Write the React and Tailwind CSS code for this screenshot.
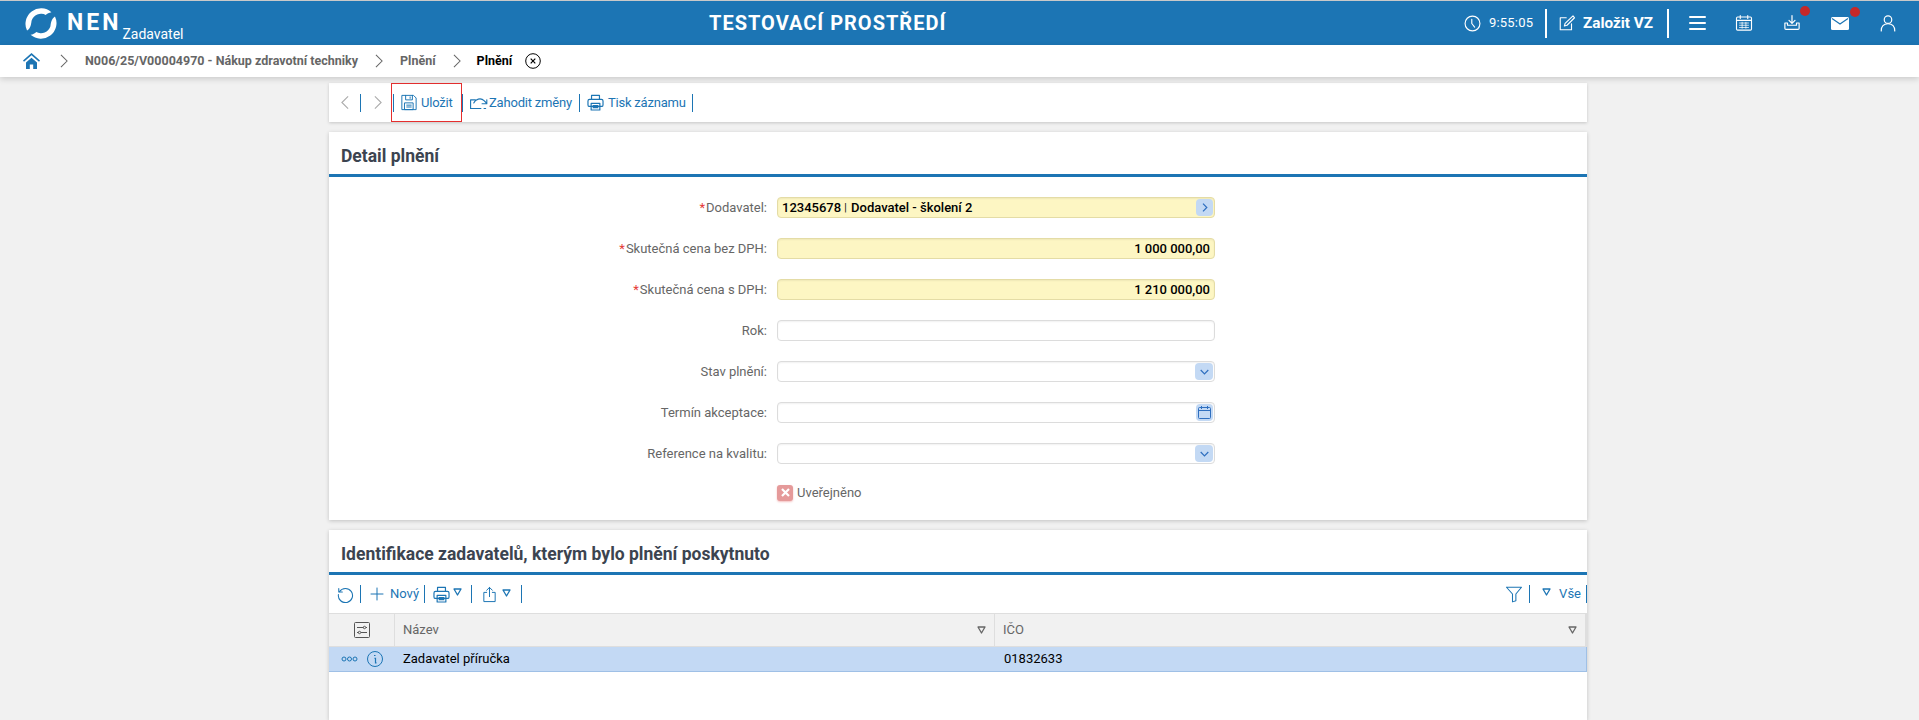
import React from "react";

const Sep = ({ className = "" }) => <span className={`block w-px h-[18px] shrink-0 bg-[#1c75b4] ${className}`} />;

const S = ({ w = 18, h = 18, vb = "0 0 24 24", sw = 1.5, className = "", children }) => (
  <svg width={w} height={h} viewBox={vb} fill="none" stroke="currentColor" strokeWidth={sw} strokeLinecap="round" strokeLinejoin="round" className={`shrink-0 ${className}`}>
    {children}
  </svg>
);

const Chevron = ({ className = "", w = 9, h = 16, left = false }) => (
  <svg width={w} height={h} viewBox="0 0 9 16" fill="none" stroke="currentColor" strokeWidth="1.2" className={className}>
    <path d={left ? "M8 1 1 8l7 7" : "M1 1l7 7-7 7"} />
  </svg>
);

const Tri = ({ className = "" }) => (
  <svg width="9" height="8" viewBox="0 0 9 8" fill="none" stroke="currentColor" strokeWidth="1.3" className={`shrink-0 ${className}`}>
    <path d="M1 1h7L4.5 7z" strokeLinejoin="round" />
  </svg>
);

const Printer = ({ className = "" }) => (
  <S w={19} h={19} className={className}>
    <path d="M7 8V3h10v5" />
    <rect x="2.5" y="8" width="19" height="9" rx="2" />
    <rect x="6.5" y="13" width="11" height="8.5" />
    <path d="M9 16h6M9 18.500h6" />
  </S>
);

function Logo() {
  const c = "M3.200 25.500A16.500 16.500 0 0 1 29 6C26.500 6.500 24.500 7.500 23 9A10.500 10.500 0 0 0 8 15C7.500 19 7 23 3.200 25.500Z";
  return (
    <svg width="34" height="35" viewBox="0 0 36 36" className="shrink-0" fill="#fff">
      <path d={c} />
      <path d={c} transform="rotate(180 18 18)" />
    </svg>
  );
}

function Header() {
  return (
    <header className="h-[45px] bg-[#1c75b4] border-t border-[#c9c9c9] flex items-center text-white relative">
      <div className="ml-[24px] flex items-center w-[156px] shrink-0">
        <Logo />
        <span className="ml-[9px] text-[23px] font-bold tracking-[3px] leading-none -mt-[1px]">NEN</span>
        <span className="text-[14px] ml-[1px] mt-[22px] leading-4">Zadavatel</span>
      </div>
      <div className="ml-[529px] text-[20px] font-bold tracking-[1px] whitespace-nowrap">TESTOVACÍ PROSTŘEDÍ</div>
      <div className="ml-auto flex items-center pr-[22px]">
        <S w={17} h={17} sw={1.6}><circle cx="12" cy="12" r="10.500" /><path d="M11 6v6l4 5" /></S>
        <span className="ml-[8px] text-[13px] tracking-[0.2px] w-[48px]">9:55:05</span>
        <span className="w-[2px] h-[29px] bg-white ml-[8px]" />
        <S w={18} h={18} className="ml-[11px]"><path d="M11 5H3v16h15v-8" /><path d="M20 2.500 22 5 12 15l-3.500 1 1-3.500z" /></S>
        <span className="ml-[7px] text-[15.300px] font-bold whitespace-nowrap w-[72px]">Založit VZ</span>
        <span className="w-[2px] h-[29px] bg-white ml-[12px]" />
        <svg width="17" height="14" viewBox="0 0 17 14" fill="#fff" className="ml-[20px] shrink-0"><rect y="0" width="17" height="2" rx="1" /><rect y="6" width="17" height="2" rx="1" /><rect y="12" width="17" height="2" rx="1" /></svg>
        <S w={18} h={18} sw={1.5} className="ml-[29px]"><rect x="2" y="4" width="20" height="17.500" rx="1.500" /><path d="M2 8.500h20M7 2v4M17 2v4" /><path d="M6 12h12M6 15h12M6 18h12M9.500 11v8M14.500 11v8" strokeWidth="1" /></S>
        <div className="relative ml-[30px]">
          <S w={18} h={18} sw={1.6}><path d="M12 2v10M8 8.500l4 4 4-4" /><path d="M6 12H2.500v7a1.500 1.500 0 0 0 1.500 1.500h16a1.500 1.500 0 0 0 1.500-1.500v-7H18v3H6z" /></S>
          <span className="absolute -top-[8px] left-[17px] w-[10px] h-[10px] rounded-full bg-[#c62828]" />
        </div>
        <div className="relative ml-[30px]">
          <svg width="18" height="13" viewBox="0 0 18 13" className="shrink-0 block"><rect width="18" height="13" rx="1.500" fill="#fff" /><path d="M1 1.500 9 7l8-5.500" fill="none" stroke="#1c75b4" strokeWidth="1.200" /></svg>
          <span className="absolute -top-[10px] left-[19px] w-[10px] h-[10px] rounded-full bg-[#c62828]" />
        </div>
        <S w={18} h={18} sw={1.6} className="ml-[30px]"><circle cx="12" cy="7.500" r="5" /><path d="M3 22.500c0-6 3.500-9.500 9-9.500s9 3.500 9 9.500" /></S>
      </div>
    </header>
  );
}

function Breadcrumb() {
  return (
    <nav className="h-[32px] bg-white shadow-[0_2px_6px_rgba(0,0,0,0.16)] flex items-center text-[12.5px] font-bold text-[#666] relative">
      <svg width="17" height="16" viewBox="0 0 17 16" fill="#1c75b4" className="ml-[23px] shrink-0">
        <path d="M8.500 0 0 7.500l1 1.200L8.500 2.200 16 8.700l1-1.200z" />
        <path d="M3 9.500 8.500 4.700 14 9.500V16h-3.800v-4.500H6.800V16H3z" />
      </svg>
      <Chevron className="ml-[20px] text-[#666] shrink-0" h={14} w={8} />
      <span className="ml-[17px]">N006/25/V00004970 - Nákup zdravotní techniky</span>
      <Chevron className="ml-[17px] text-[#666] shrink-0" h={14} w={8} />
      <span className="ml-[17px]">Plnění</span>
      <Chevron className="ml-[17px] text-[#666] shrink-0" h={14} w={8} />
      <span className="ml-[16px] text-black">Plnění</span>
      <svg width="16" height="16" viewBox="0 0 16 16" fill="none" stroke="#000" strokeWidth="1" className="ml-[13px] shrink-0"><circle cx="8" cy="8" r="7.300" /><path d="M5.700 5.700l4.600 4.600M10.300 5.700l-4.600 4.600" strokeWidth="1.200" /></svg>
    </nav>
  );
}

function Toolbar() {
  return (
    <div className="mt-[6px] h-[39px] bg-white shadow-[0_1px_3px_rgba(0,0,0,0.18)] flex items-center text-[#1c75b4] text-[13px] tracking-[-0.2px]">
      <Chevron left className="ml-[12px] text-[#aaa] shrink-0" w={8} h={15} />
      <Sep className="ml-[11px]" />
      <Chevron className="ml-[13px] text-[#aaa] shrink-0" w={8} h={15} />
      <Sep className="ml-[11px]" />
      <div className="h-[39px] -ml-[3px] w-[71px] border border-[#e52f2f] flex items-center shrink-0">
        <S w={18} h={19} sw={1.3} className="ml-[8px]"><path d="M3 2.500h15l3.500 3.500v15.500H3z" /><path d="M7.500 2.500v6h9v-6M13.500 4.500v2" /><rect x="6.500" y="12.500" width="11" height="9" /><path d="M9 15.500h6M9 18h6" /></S>
        <span className="ml-[3px]">Uložit</span>
      </div>
      <Sep />
      <S w={19} h={16} vb="0 0 24 20" sw={1.4} className="ml-[6px]"><path d="M2 17V6h6" /><path d="M2 17h13" /><path d="M6 10c2-5 9-7 13-3l3 3M16.500 11H22.500V6" /><path d="M21 17H19" /></S>
      <span className="ml-[1px] whitespace-nowrap">Zahodit změny</span>
      <Sep className="ml-[7px]" />
      <Printer className="ml-[6px]" />
      <span className="ml-[3px] whitespace-nowrap">Tisk záznamu</span>
      <Sep className="ml-[6px]" />
    </div>
  );
}

const Label = ({ req, children }) => (
  <div className="w-[438px] text-right text-[13px] text-[#666] shrink-0 whitespace-nowrap leading-[21px]">
    {req && <span className="text-[#e53935] mr-[1px]">*</span>}
    {children}:
  </div>
);

const Btn = ({ children, w = "w-[18px]" }) => (
  <span className={`absolute right-[1px] top-[1px] bottom-[1px] ${w} rounded-[4px] bg-[#c3d9f4] text-[#2f6fbf] flex items-center justify-center`}>{children}</span>
);

const Down = () => (
  <svg width="9" height="6" viewBox="0 0 9 6" fill="none" stroke="currentColor" strokeWidth="1.200"><path d="M.7 1 4.500 4.800 8.300 1" /></svg>
);

function Field({ label, req, value, align, children }) {
  return (
    <div className="flex items-center gap-[10px] h-[21px]">
      <Label req={req}>{label}</Label>
      <div className={`relative w-[438px] h-[21px] rounded-[4px] border shadow-[inset_0_1px_2px_rgba(0,0,0,0.06)] flex items-center text-[13px] font-medium text-black px-[4px] ${req ? "bg-[#fdf6c3] border-[#e4dca6]" : "bg-white border-[#dcdcdc]"} ${align === "right" ? "justify-end" : ""}`}>
        {value}
        {children}
      </div>
    </div>
  );
}

function CardTitle({ children }) {
  return (
    <div className="h-[45px] flex items-center pt-[7px] px-[12px] border-b-[3px] border-[#1c75b4] text-[17.5px] font-bold text-[#3c4450] whitespace-nowrap">{children}</div>
  );
}

function DetailCard() {
  return (
    <section className="mt-[10px] h-[388px] bg-white shadow-[0_1px_4px_rgba(0,0,0,0.2)]">
      <CardTitle>Detail plnění</CardTitle>
      <div className="pt-[20px] flex flex-col gap-[20px]">
        <Field label="Dodavatel" req value={<span>12345678 <span className="font-normal text-[10px] align-[1px] mr-[1px]">|</span> Dodavatel - školení 2</span>}>
          <Btn w="w-[17px]"><svg width="6" height="9" viewBox="0 0 6 9" fill="none" stroke="currentColor" strokeWidth="1.200"><path d="M1 .7 4.800 4.500 1 8.300" /></svg></Btn>
        </Field>
        <Field label="Skutečná cena bez DPH" req align="right" value="1 000 000,00" />
        <Field label="Skutečná cena s DPH" req align="right" value="1 210 000,00" />
        <Field label="Rok" />
        <Field label="Stav plnění"><Btn><Down /></Btn></Field>
        <Field label="Termín akceptace">
          <Btn w="w-[17px]"><svg width="13" height="13" viewBox="0 0 13 13" fill="none" stroke="currentColor" strokeWidth="1"><rect x=".5" y="1.500" width="12" height="11" rx="1" /><path d="M.5 4.500h12M3.500 0v3M9.500 0v3" /></svg></Btn>
        </Field>
        <Field label="Reference na kvalitu"><Btn><Down /></Btn></Field>
        <div className="flex items-center h-[21px] pl-[448px] -mt-[2px]">
          <span className="w-4 h-4 rounded-[3px] bg-[#e59a9a] flex items-center justify-center shadow-[0_1px_2px_rgba(229,100,100,0.4)]">
            <svg width="9" height="9" viewBox="0 0 9 9" stroke="#fff" strokeWidth="2.200"><path d="M1 1l7 7M8 1 1 8" /></svg>
          </span>
          <span className="ml-[4px] text-[13px] text-[#666]">Uveřejněno</span>
        </div>
      </div>
    </section>
  );
}

function ListCard() {
  return (
    <section className="mt-[10px] h-[190px] bg-white shadow-[0_1px_4px_rgba(0,0,0,0.2)] overflow-hidden">
      <CardTitle>Identifikace zadavatelů, kterým bylo plnění poskytnuto</CardTitle>
      <div className="h-[38px] flex items-center text-[#1c75b4] text-[13px]">
        <S w={17} h={17} sw={1.5} className="ml-[8px]"><path d="M3.500 8A10 10 0 1 1 2 12" /><path d="M2.500 3.500v5h5" /></S>
        <Sep className="ml-[6px]" />
        <S w={16} h={16} sw={1.5} className="ml-[8px]"><path d="M12 3v18M3 12h18" /></S>
        <span className="ml-[5px]">Nový</span>
        <Sep className="ml-[5px]" />
        <Printer className="ml-[7px]" />
        <Tri className="ml-[2px] -mt-[4px]" />
        <Sep className="ml-[9px]" />
        <S w={17} h={19} sw={1.4} className="ml-[9px]"><path d="M8 9H4v13h16V9h-4" /><path d="M12 2v13M8 6l4-4 4 4" /></S>
        <Tri className="ml-[4px] -mt-[3px]" />
        <Sep className="ml-[10px]" />
        <div className="ml-auto flex items-center">
          <S w={18} h={18} sw={1.4} className="mr-[6px]"><path d="M2 3h20l-7.500 9v9L10 22.500V12z" /></S>
          <Sep />
          <Tri className="ml-[12px] -mt-[4px]" />
          <span className="ml-[8px]">Vše</span>
          <Sep className="ml-[5px]" />
        </div>
      </div>
      <div className="h-[34px] bg-[#f1f1f1] border-y border-[#dedede] border-r-2 flex items-center text-[13px] text-[#666]">
        <div className="w-[66px] h-full flex items-center justify-center border-r border-[#dedede] shrink-0">
          <svg width="16" height="16" viewBox="0 0 16 16" fill="none" stroke="#555" strokeWidth="1"><rect x=".5" y=".5" width="15" height="15" rx="1" /><path d="M3 5.500h6.500M12 5.500h1M3 10.500h1.500M7 10.500h6" /><circle cx="10.500" cy="5.500" r="1.200" /><circle cx="5.500" cy="10.500" r="1.200" /></svg>
        </div>
        <div className="w-[600px] h-full px-[8px] flex items-center justify-between border-r border-[#dedede] shrink-0">
          <span>Název</span><Tri className="text-[#666]" />
        </div>
        <div className="flex-1 h-full px-[8px] flex items-center justify-between">
          <span>IČO</span><Tri className="text-[#666]" />
        </div>
      </div>
      <div className="h-[25px] bg-[#c3d9f4] border-b border-[#9fc0e6] border-r flex items-center text-[13px] text-black">
        <div className="w-[66px] flex items-center shrink-0 text-[#1c75b4]">
          <svg width="17" height="6" viewBox="0 0 17 6" fill="none" stroke="currentColor" strokeWidth="1" className="ml-[12px]"><circle cx="3" cy="3" r="2" /><circle cx="8.500" cy="3" r="2" /><circle cx="14" cy="3" r="2" /></svg>
          <svg width="16" height="16" viewBox="0 0 16 16" fill="none" stroke="currentColor" strokeWidth="1" className="ml-[9px]"><circle cx="8" cy="8" r="7.500" /><path d="M7 4.500h1.500M7.500 7.300h1v4.500h1" strokeWidth="1.200" /></svg>
        </div>
        <div className="w-[601px] px-[8px] shrink-0">Zadavatel příručka</div>
        <div className="px-[8px]">01832633</div>
      </div>
    </section>
  );
}

export default function App() {
  return (
    <div className="h-[720px] overflow-hidden bg-[#f1f1f1] font-['Roboto',sans-serif]">
      <Header />
      <Breadcrumb />
      <main className="w-[1258px] ml-[329px]">
        <Toolbar />
        <DetailCard />
        <ListCard />
      </main>
    </div>
  );
}
